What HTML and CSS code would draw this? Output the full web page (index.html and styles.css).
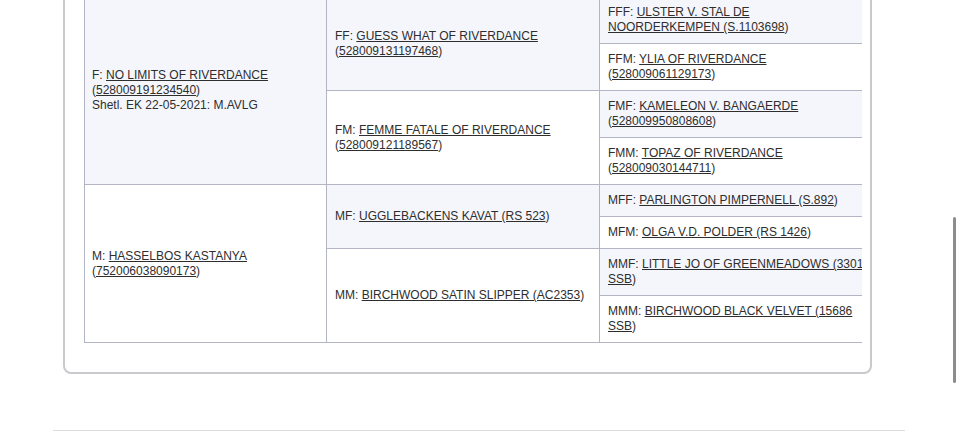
FILE: index.html
```html
<!DOCTYPE html>
<html lang="nl">
<head>
<meta charset="utf-8">
<title>Stamboom</title>
<link rel="stylesheet" href="styles.css">
</head>
<body>
<div class="page">
  <section class="card">
    <div class="clip">
      <table class="pedigree">
        <colgroup><col class="c1"><col class="c2"><col class="c3"></colgroup>
        <tr>
          <td rowspan="4" class="g1 lt">F: <a href="#">NO LIMITS OF RIVERDANCE</a><br>(<a href="#">528009191234540</a>)<br>Shetl. EK 22-05-2021: M.AVLG</td>
          <td rowspan="2" class="lt">FF: <a href="#">GUESS WHAT OF RIVERDANCE</a><br>(<a href="#">528009131197468</a>)</td>
          <td class="lt">FFF: <a href="#">ULSTER V. STAL DE<br>NOORDERKEMPEN (S.1103698</a>)</td>
        </tr>
        <tr>
          <td>FFM: <a href="#">YLIA OF RIVERDANCE</a><br>(<a href="#">528009061129173</a>)</td>
        </tr>
        <tr>
          <td rowspan="2">FM: <a href="#">FEMME FATALE OF RIVERDANCE</a><br>(<a href="#">528009121189567</a>)</td>
          <td class="lt">FMF: <a href="#">KAMELEON V. BANGAERDE</a><br>(<a href="#">528009950808608</a>)</td>
        </tr>
        <tr>
          <td>FMM: <a href="#">TOPAZ OF RIVERDANCE</a><br>(<a href="#">528009030144711</a>)</td>
        </tr>
        <tr>
          <td rowspan="4" class="g1">M: <a href="#">HASSELBOS KASTANYA</a><br>(<a href="#">752006038090173</a>)</td>
          <td rowspan="2" class="lt">MF: <a href="#">UGGLEBACKENS KAVAT (RS 523</a>)</td>
          <td class="lt">MFF: <a href="#">PARLINGTON PIMPERNELL (S.892</a>)</td>
        </tr>
        <tr>
          <td>MFM: <a href="#">OLGA V.D. POLDER (RS 1426</a>)</td>
        </tr>
        <tr>
          <td rowspan="2">MM: <a href="#">BIRCHWOOD SATIN SLIPPER (AC2353</a>)</td>
          <td class="lt">MMF: <a href="#">LITTLE JO OF GREENMEADOWS (3301<br>SSB</a>)</td>
        </tr>
        <tr>
          <td>MMM: <a href="#">BIRCHWOOD BLACK VELVET (15686<br>SSB</a>)</td>
        </tr>
      </table>
    </div>
  </section>
  <hr class="rule">
</div>
<div class="thumb"></div>
</body>
</html>
```

FILE: styles.css
```css
html, body {
  margin: 0;
  padding: 0;
  background: #ffffff;
}
body {
  font-family: "Liberation Sans", Arial, sans-serif;
  font-size: 12px;
  line-height: 15px;
  color: #2e2e2e;
  overflow: hidden;
}
.page {
  width: 852px;
  margin-left: 53px;
}
.card {
  margin: -26px 33px 0 10px;
  border: 2px solid #c9c9ce;
  border-radius: 8px;
  padding: 20px 8px 29px 19px;
}
.clip {
  overflow: hidden;
}
.pedigree {
  border-collapse: collapse;
  table-layout: fixed;
  width: 800px;
}
.c1 { width: 242px; }
.c2 { width: 273px; }
.c3 { width: 285px; }
.pedigree td {
  border: 1px solid #b3b5c4;
  padding: 8px 7px 8px 8px;
  vertical-align: middle;
  background: #ffffff;
  white-space: nowrap;
}
.pedigree td.g1 {
  padding-left: 7px;
}
.pedigree td.lt {
  background: #f4f6fc;
}
.pedigree a {
  color: #2e2e2e;
  text-decoration: underline;
}
.rule {
  margin: 56px 0 0 0;
  border: 0;
  border-top: 1px solid #dcdcdc;
  height: 0;
}
.thumb {
  position: fixed;
  left: 953px;
  top: 217px;
  width: 3px;
  height: 166px;
  border-radius: 2px;
  background: #8c8c8c;
}
```
